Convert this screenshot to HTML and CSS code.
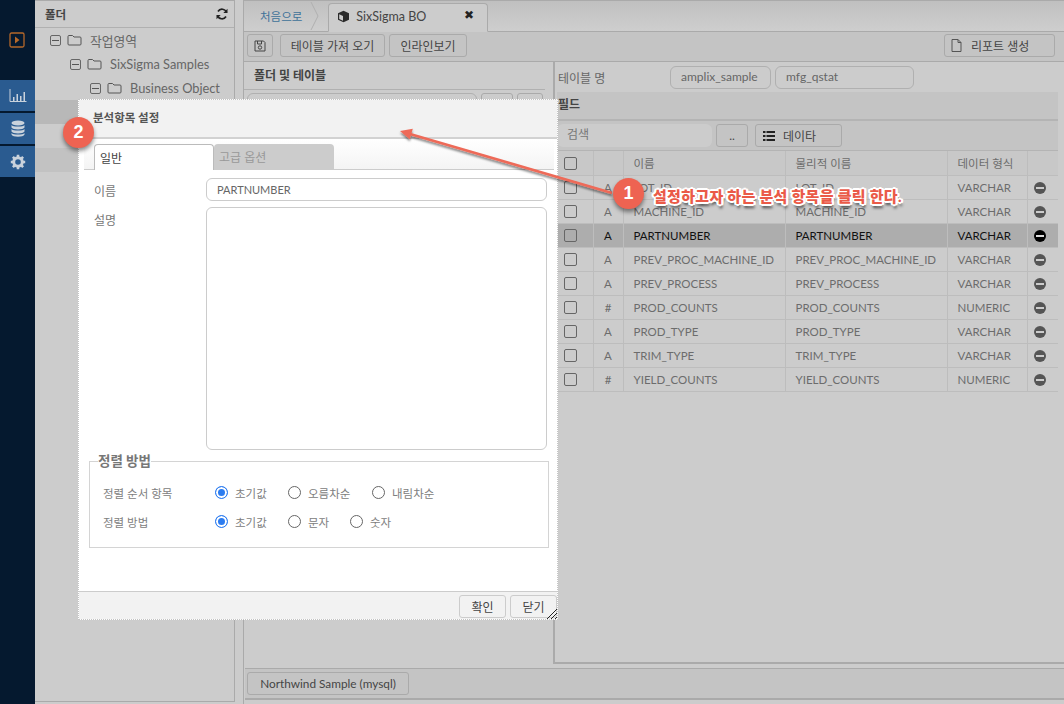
FILE: index.html
```html
<!DOCTYPE html>
<html lang="ko">

<head>
  <meta charset="UTF-8" />
  <meta name="viewport" content="width=device-width,initial-scale=1.0" />
  <title>SixSigma BO</title>
  <link rel="stylesheet" href="styles.css">
</head>

<body>
  <div class="app">
    <nav class="sidebar">
      <div class="side-toggle">
        <svg width="16" height="16" viewBox="0 0 16 16"><rect x="1" y="1" width="14" height="14" rx="1.5" fill="none" stroke="#b5682a" stroke-width="1.3"/><path d="M6 4.5 L10.5 8 L6 11.5 Z" fill="#b5682a"/></svg>
      </div>
      <div class="side-btn">
        <svg width="18" height="14" viewBox="0 0 18 14"><path d="M1 0 V12.5 H17.5" fill="none" stroke="#c9d2dc" stroke-width="1"/><path d="M4 8h1.500v4H4zM7.500 5H9v7H7.500zM11 7h1.500v5H11zM14.500 3H16v9h-1.500z" fill="#c9d2dc"/></svg>
      </div>
      <div class="side-btn">
        <svg width="14" height="17" viewBox="0 0 14 17" fill="#c9d2dc"><ellipse cx="7" cy="3" rx="6.500" ry="2.500"/><path d="M.5 5c1 2 12 2 13 0v2.500c-1 2.500-12 2.500-13 0zM.5 9c1 2 12 2 13 0v2.500c-1 2.500-12 2.500-13 0zM.5 13c1 2 12 2 13 0v1.500c-1 3-12 3-13 0z"/></svg>
      </div>
      <div class="side-btn">
        <svg width="16" height="16" viewBox="0 0 16 16"><circle cx="8" cy="8" r="4.300" fill="none" stroke="#c9d2dc" stroke-width="3"/><path d="M8 .8V4M8 12v3.200M.8 8H4M12 8h3.200M2.900 2.900l2.200 2.200M10.900 10.900l2.200 2.200M13.100 2.900l-2.200 2.200M5.100 10.900l-2.200 2.200" stroke="#c9d2dc" stroke-width="2.600"/></svg>
      </div>
    </nav>

    <aside class="folders">
      <div class="folders-head">
        <span>폴더</span>
        <svg width="12" height="12" viewBox="0 0 12 12"><path d="M10.500 4.500A4.700 4.700 0 0 0 2 3.500M1.500 7.500A4.700 4.700 0 0 0 10 8.500" fill="none" stroke="#222" stroke-width="1.700"/><path d="M11.500 .8V5H7.300zM.5 11.200V7h4.200z" fill="#222"/></svg>
      </div>
      <div class="tree-row lvl0">
        <span class="expander"></span>
        <svg class="folder" width="15" height="12" viewBox="0 0 15 12"><path d="M1 2.500a1 1 0 0 1 1-1h3.500l1.500 1.500h6a1 1 0 0 1 1 1v6a1 1 0 0 1-1 1H2a1 1 0 0 1-1-1z" fill="none" stroke="#555" stroke-width="1"/></svg>
        작업영역
      </div>
      <div class="tree-row lvl1">
        <span class="expander"></span>
        <svg class="folder" width="15" height="12" viewBox="0 0 15 12"><path d="M1 2.500a1 1 0 0 1 1-1h3.500l1.500 1.500h6a1 1 0 0 1 1 1v6a1 1 0 0 1-1 1H2a1 1 0 0 1-1-1z" fill="none" stroke="#555" stroke-width="1"/></svg>
        SixSigma Samples
      </div>
      <div class="tree-row lvl2">
        <span class="expander"></span>
        <svg class="folder" width="15" height="12" viewBox="0 0 15 12"><path d="M1 2.500a1 1 0 0 1 1-1h3.500l1.500 1.500h6a1 1 0 0 1 1 1v6a1 1 0 0 1-1 1H2a1 1 0 0 1-1-1z" fill="none" stroke="#555" stroke-width="1"/></svg>
        Business Object
      </div>
      <div class="tree-row selected"></div>
      <div class="tree-row"></div>
      <div class="tree-row alt"></div>
    </aside>

    <main class="main">
      <div class="tabstrip">
        <a class="home-link">처음으로</a>
        <svg class="crumb" width="10" height="30" viewBox="0 0 10 30"><path d="M1 1 L8 15 L1 29" fill="none" stroke="#b0b0b0"/></svg>
        <div class="doc-tab">
          <svg width="13" height="13" viewBox="0 0 13 13"><path d="M6.500 .8 L12 3.300 V9.700 L6.500 12.300 L1 9.700 V3.300 Z" fill="#2a2a2a"/><path d="M2.200 4.300 L6 6.100 V10.800 L2.200 9 Z" fill="#ccc"/></svg>
          <span class="doc-title">SixSigma BO</span>
          <span class="doc-close">✖</span>
        </div>
      </div>

      <div class="toolbar">
        <button class="btn icon-btn">
          <svg width="12" height="12" viewBox="0 0 12 12"><path d="M1 1h8.500L11 2.500V11H1z M3.500 1v3h4V1" fill="none" stroke="#444"/><circle cx="6" cy="7.500" r="1.700" fill="none" stroke="#444"/></svg>
        </button>
        <button class="btn wide-import">테이블 가져 오기</button>
        <button class="btn wide-inline">인라인보기</button>
        <button class="btn report-btn">
          <svg width="11" height="13" viewBox="0 0 11 13"><path d="M1 .5h6l3 3v9H1z M7 .5v3h3" fill="none" stroke="#555"/></svg>
          리포트 생성
        </button>
      </div>

      <div class="split">
        <section class="left-pane">
          <h4 class="pane-title">폴더 및 테이블</h4>
          <div class="left-search">
            <span class="input grow"></span>
            <button class="btn small-a"></button>
            <button class="btn small-b"></button>
          </div>
        </section>

        <section class="right-pane">
          <div class="table-name">
            <label>테이블 명</label>
            <span class="input schema">amplix_sample</span>
            <span class="input tname">mfg_qstat</span>
          </div>
          <h4 class="field-title">필드</h4>
          <div class="field-tools">
            <span class="input field-search">검색</span>
            <button class="btn dots">..</button>
            <button class="btn data-btn">
              <svg width="12" height="10" viewBox="0 0 12 10" fill="#222"><path d="M0 0h2.500v2H0zM3.500 0H12v2H3.500zM0 4h2.500v2H0zM3.500 4H12v2H3.500zM0 8h2.500v2H0zM3.500 8H12v2H3.500z"/></svg>
              데이타
            </button>
          </div>
          <table class="fields">
            <thead>
              <tr><th class="c-check"><span class="check"></span></th><th class="c-type"></th><th class="c-name">이름</th><th class="c-phys">물리적 이름</th><th class="c-data">데이터 형식</th><th class="c-del"></th></tr>
            </thead>
            <tbody>
              <tr><td><span class="check"></span></td><td class="mid">A</td><td>LOT_ID</td><td>LOT_ID</td><td>VARCHAR</td><td class="del"><span class="minus"></span></td></tr>
              <tr><td><span class="check"></span></td><td class="mid">A</td><td>MACHINE_ID</td><td>MACHINE_ID</td><td>VARCHAR</td><td class="del"><span class="minus"></span></td></tr>
              <tr class="picked"><td><span class="check"></span></td><td class="mid">A</td><td>PARTNUMBER</td><td>PARTNUMBER</td><td>VARCHAR</td><td class="del"><span class="minus"></span></td></tr>
              <tr><td><span class="check"></span></td><td class="mid">A</td><td>PREV_PROC_MACHINE_ID</td><td>PREV_PROC_MACHINE_ID</td><td>VARCHAR</td><td class="del"><span class="minus"></span></td></tr>
              <tr><td><span class="check"></span></td><td class="mid">A</td><td>PREV_PROCESS</td><td>PREV_PROCESS</td><td>VARCHAR</td><td class="del"><span class="minus"></span></td></tr>
              <tr><td><span class="check"></span></td><td class="mid">#</td><td>PROD_COUNTS</td><td>PROD_COUNTS</td><td>NUMERIC</td><td class="del"><span class="minus"></span></td></tr>
              <tr><td><span class="check"></span></td><td class="mid">A</td><td>PROD_TYPE</td><td>PROD_TYPE</td><td>VARCHAR</td><td class="del"><span class="minus"></span></td></tr>
              <tr><td><span class="check"></span></td><td class="mid">A</td><td>TRIM_TYPE</td><td>TRIM_TYPE</td><td>VARCHAR</td><td class="del"><span class="minus"></span></td></tr>
              <tr><td><span class="check"></span></td><td class="mid">#</td><td>YIELD_COUNTS</td><td>YIELD_COUNTS</td><td>NUMERIC</td><td class="del"><span class="minus"></span></td></tr>
            </tbody>
          </table>
        </section>
      </div>

      <div class="bottom-bar">
        <button class="btn sample-btn">Northwind Sample (mysql)</button>
      </div>
    </main>
  </div>

  <!-- 분석항목 설정 dialog -->
  <div class="dialog">
    <div class="dialog-head">분석항목 설정</div>
    <div class="dialog-tabs">
      <span class="dtab on">일반</span>
      <span class="dtab">고급 옵션</span>
    </div>
    <div class="dialog-body">
      <div class="form-row">
        <label>이름</label>
        <span class="text-input">PARTNUMBER</span>
      </div>
      <div class="form-row">
        <label>설명</label>
        <span class="text-area"></span>
      </div>
      <fieldset class="sort-box">
        <legend>정렬 방법</legend>
        <div class="sort-row">
          <label>정렬 순서 항목</label>
          <span class="radio on"></span><span class="r-text first">초기값</span>
          <span class="radio"></span><span class="r-text asc">오름차순</span>
          <span class="radio"></span><span class="r-text">내림차순</span>
        </div>
        <div class="sort-row">
          <label>정렬 방법</label>
          <span class="radio on"></span><span class="r-text first">초기값</span>
          <span class="radio"></span><span class="r-text str">문자</span>
          <span class="radio"></span><span class="r-text">숫자</span>
        </div>
      </fieldset>
    </div>
    <div class="dialog-foot">
      <button class="btn foot-btn">확인</button>
      <button class="btn foot-btn">닫기</button>
      <svg class="grip" width="10" height="10" viewBox="0 0 10 10"><path d="M0 10 L10 0 M4 10 L10 4 M8 10 L10 8" stroke="#222" stroke-width="1"/></svg>
    </div>
  </div>

  <!-- annotation over the screenshot -->
  <svg class="arrow" width="1064" height="704" viewBox="0 0 1064 704">
    <defs>
      <filter id="drop" x="-10%" y="-30%" width="120%" height="170%"><feDropShadow dx="0" dy="2" stdDeviation="1.200" flood-color="#000" flood-opacity=".5"/></filter>
    </defs>
    <g filter="url(#drop)">
      <path d="M612 193 L410 134" stroke="#ee6a58" stroke-width="2.600" fill="none"/>
      <path d="M400 131 L412.800 128.700 L409.700 139.300 Z" fill="#ee6a58"/>
    </g>
  </svg>
  <span class="step step-one">1</span>
  <span class="step step-two">2</span>
  <span class="note">설정하고자 하는 분석 항목을 클릭 한다.</span>
</body>

</html>
```

FILE: styles.css
```css
* {
  box-sizing: border-box;
}

html,
body {
  margin: 0;
  height: 704px;
  overflow: hidden;
}

body {
  position: relative;
  font-family: "Lato", "Noto Sans CJK KR", sans-serif;
  font-size: 12px;
  color: #666;
  background: #ccc;
}

button {
  font: inherit;
}

.app {
  display: flex;
  height: 704px;
}

/* sidebar */
.sidebar {
  width: 35px;
  flex: none;
  background: #05192f;
  padding-top: 32px;
}

.side-toggle {
  height: 48px;
  padding-left: 9px;
}

.side-btn {
  height: 31px;
  margin-bottom: 2px;
  background: #2a5b90;
  display: flex;
  align-items: center;
  justify-content: center;
}

/* folder tree */
.folders {
  width: 200px;
  height: 702px;
  flex: none;
  background: #ccc;
  border-right: 1px solid #aaa;
  border-bottom: 1px solid #aaa;
}

.folders-head {
  height: 28px;
  border-top: 1px solid #aaa;
  border-bottom: 1px solid #b0b0b0;
  padding: 0 6px 0 10px;
  display: flex;
  align-items: center;
  justify-content: space-between;
  font-weight: 700;
  color: #444;
  font-size: 11.500px;
}

.tree-row {
  height: 24px;
  display: flex;
  align-items: center;
  font-size: 12.800px;
  color: #666;
}

.tree-row.selected {
  background: #b8b8b8;
}

.tree-row.alt {
  background: #c2c2c2;
}

.lvl0 {
  padding-left: 15px;
}

.lvl1 {
  padding-left: 35px;
}

.lvl2 {
  padding-left: 55px;
}

.expander {
  position: relative;
  width: 11px;
  height: 11px;
  border: 1px solid #666;
  border-radius: 2px;
  margin-right: 6px;
}

.expander::after {
  content: "";
  position: absolute;
  left: 1px;
  right: 1px;
  top: 4px;
  height: 1px;
  background: #555;
}

.folder {
  margin-right: 8px;
}

/* main area */
.main {
  flex: 1;
  min-width: 0;
  margin-left: 8px;
  display: flex;
  flex-direction: column;
  border-left: 1px solid #aaa;
}

.tabstrip {
  height: 32px;
  flex: none;
  display: flex;
  align-items: flex-end;
  padding-left: 16px;
  border-top: 1px solid #aaa;
  border-bottom: 1px solid #aaa;
  background: linear-gradient(#c0c0c0, #cecece);
}

.home-link {
  color: #3f7299;
  align-self: center;
  font-size: 11.500px;
}

.crumb {
  margin: 0 8px 0 8px;
  align-self: center;
}

.doc-tab {
  width: 160px;
  height: 29px;
  margin-bottom: -1px;
  border: 1px solid #aaa;
  border-bottom: 1px solid #ccc;
  border-radius: 4px 4px 0 0;
  background: #ccc;
  display: flex;
  align-items: center;
  padding: 0 0 3px 8px;
  color: #444;
  font-size: 12.500px;
}

.doc-title {
  margin-left: 6px;
}

.doc-close {
  margin-left: 38px;
  color: #222;
  font-size: 12px;
  margin-top: -4px;
}

.toolbar {
  height: 30px;
  flex: none;
  display: flex;
  align-items: center;
  padding: 0 0 2px 3px;
  background: #c4c4c4;
  border-bottom: 1px solid #aaa;
}

.btn {
  height: 23px;
  padding: 0;
  border: 1px solid #aaa;
  border-radius: 3px;
  background: transparent;
  color: #444;
  font-size: 12px;
}

.icon-btn {
  width: 26px;
  display: flex;
  align-items: center;
  justify-content: center;
}

.wide-import {
  width: 105px;
  margin-left: 7px;
}

.wide-inline {
  width: 78px;
  margin-left: 4px;
}

.report-btn {
  width: 111px;
  margin-left: auto;
  margin-right: 9px;
  display: flex;
  align-items: center;
  padding-left: 6px;
  gap: 9px;
}

.split {
  flex: 1;
  min-height: 0;
  display: flex;
}

.left-pane {
  width: 309px;
  flex: none;
  padding-right: 8px;
}

.pane-title {
  margin: 0;
  height: 28px;
  line-height: 27px;
  padding-left: 10px;
  font-size: 12px;
  color: #444;
  border-bottom: 1px solid #b0b0b0;
}

.left-search {
  display: flex;
  gap: 4px;
  padding: 3px 2px 0 3px;
}

.input {
  height: 23px;
  line-height: 20px;
  border: 1px solid #b0b0b0;
  border-radius: 6px;
  padding-left: 10px;
  display: inline-block;
}

.grow {
  flex: 1;
}

.small-a {
  width: 32px;
}

.small-b {
  width: 26px;
}

.right-pane {
  flex: 1;
  min-width: 0;
  height: 602px;
  border-left: 2px solid #aaa;
  border-bottom: 2px solid #aaa;
  display: flex;
  flex-direction: column;
  padding-right: 6px;
}

.table-name {
  height: 30px;
  display: flex;
  align-items: center;
  padding-left: 3px;
  flex: none;
}

.table-name label {
  width: 112px;
}

.schema {
  width: 101px;
  margin-right: 4px;
}

.tname {
  width: 139px;
}

.field-title {
  margin: 0 0 0 2px;
  height: 29px;
  flex: none;
  line-height: 26px;
  padding-left: 1px;
  font-size: 12px;
  color: #444;
  background: #c4c4c4;
  border-bottom: 2px solid #b4b4b4;
}

.field-tools {
  height: 30px;
  flex: none;
  margin-left: 2px;
  background: #c4c4c4;
  display: flex;
  align-items: center;
  border-bottom: 1px solid #b4b4b4;
}

.field-search {
  width: 155px;
  border: 0;
  background: #ccc;
  color: #777;
  line-height: 22px;
  margin-right: 4px;
  padding-left: 10px;
}

.dots {
  width: 32px;
  margin-right: 7px;
}

.data-btn {
  width: 87px;
  display: flex;
  align-items: center;
  padding-left: 7px;
  gap: 8px;
}

.fields {
  width: 500px;
  margin-left: 3px;
  border-collapse: collapse;
  table-layout: fixed;
  flex: none;
  font-size: 11.500px;
}

.fields th,
.fields td {
  height: 24px;
  padding: 0 0 0 10px;
  text-align: left;
  font-weight: 400;
  border-right: 1px solid #bdbdbd;
  border-bottom: 1px solid #bdbdbd;
  color: #6c6c6c;
  white-space: nowrap;
}

.fields th {
  background: #c8c8c8;
}

.fields th:last-child,
.fields td:last-child {
  border-right: 0;
}

.fields .mid {
  padding: 0;
  text-align: center;
}

.fields td:first-child,
.fields th:first-child,
.fields .del {
  padding: 0 0 0 6px;
}

.c-check {
  width: 35px;
}

.c-type {
  width: 30px;
}

.c-name,
.c-phys {
  width: 162px;
}

.c-data {
  width: 80px;
}

.fields .picked td {
  background: #adadad;
  color: #111;
}

.check {
  display: inline-block;
  width: 13px;
  height: 13px;
  border: 1px solid #666;
  border-radius: 2px;
  vertical-align: middle;
}

.minus {
  position: relative;
  display: inline-block;
  width: 12px;
  height: 12px;
  border-radius: 50%;
  background: #555;
  vertical-align: middle;
}

.minus::after {
  content: "";
  position: absolute;
  left: 2px;
  right: 2px;
  top: 5px;
  height: 2px;
  background: #ccc;
}

.picked .minus {
  background: #000;
}

.picked .minus::after {
  background: #ddd;
}

.bottom-bar {
  height: 32px;
  flex: none;
  margin: 2px 0 4px 1px;
  padding: 3px 0 0 2px;
  background: #c4c4c4;
  border-top: 1px solid #aaa;
  border-bottom: 2px solid #aaa;
}

.sample-btn {
  width: 162px;
  font-size: 11.800px;
}

/* dialog */
.dialog {
  position: absolute;
  left: 78px;
  top: 99px;
  width: 480px;
  height: 521px;
  background: #fff;
  border: 1px dotted #c4c4c4;
  display: flex;
  flex-direction: column;
}

.dialog-head {
  height: 39px;
  flex: none;
  background: #f2f2f2;
  border-bottom: 2px solid #d2d2d2;
  padding: 0 0 4px 14px;
  display: flex;
  align-items: center;
  font-weight: 700;
  font-size: 11.500px;
  color: #555;
}

.dialog-tabs {
  height: 31px;
  flex: none;
  margin: 0 3px 0 5px;
  padding: 5px 0 0 10px;
  display: flex;
  background: linear-gradient(#fff, #f4f4f4);
  border-bottom: 1px solid #ccc;
}

.dtab {
  width: 120px;
  height: 26px;
  border-radius: 4px 4px 0 0;
  background: #ccc;
  color: #999;
  padding: 4px 0 0 5px;
}

.dtab.on {
  width: 120px;
  background: #fff;
  color: #444;
  border: 1px solid #bbb;
  border-bottom: 0;
}

.dialog-body {
  flex: 1;
  min-height: 0;
  padding: 8px 10px 0 10px;
}

.form-row {
  display: flex;
  margin-bottom: 6px;
}

.form-row label {
  width: 117px;
  flex: none;
  padding: 4px 0 0 5px;
  color: #777;
}

.text-input {
  width: 341px;
  height: 23px;
  line-height: 21px;
  border: 1px solid #ccc;
  border-radius: 6px;
  padding-left: 10px;
  color: #666;
  font-size: 11px;
}

.text-area {
  width: 341px;
  height: 243px;
  border: 1px solid #ccc;
  border-radius: 6px;
}

.sort-box {
  width: 460px;
  height: 96px;
  margin: -4px 0 0 0;
  padding: 8px 0 0 13px;
  border: 1px solid #d4d4d4;
  min-width: 0;
}

.sort-box legend {
  margin-left: -5px;
  padding: 0;
  font-size: 13.500px;
  font-weight: 700;
  color: #777;
  line-height: 18px;
}

.sort-row {
  display: flex;
  align-items: center;
  height: 29px;
  color: #808080;
  font-size: 11.500px;
}

.sort-row label {
  width: 112px;
  flex: none;
}

.radio {
  width: 13px;
  height: 13px;
  flex: none;
  border: 1px solid #666;
  border-radius: 50%;
}

.radio.on {
  border-color: #2c7cf0;
  background: #2c7cf0;
  box-shadow: inset 0 0 0 2px #fff;
}

.r-text {
  margin: 0 20px 0 7px;
  white-space: nowrap;
}

.r-text.first {
  width: 33px;
}

.r-text.asc {
  width: 44px;
}

.r-text.str {
  width: 22px;
}

.dialog-foot {
  position: relative;
  height: 28px;
  flex: none;
  background: #f2f2f2;
  border-top: 1px solid #ccc;
  display: flex;
  justify-content: flex-end;
  align-items: center;
  gap: 4px;
}

.foot-btn {
  width: 47px;
  height: 23px;
  border-color: #ccc;
  margin-top: 1px;
  color: #444;
}

.grip {
  position: absolute;
  right: 0;
  bottom: 0;
}

/* annotation */
.arrow {
  position: absolute;
  left: 0;
  top: 0;
  pointer-events: none;
}

.step {
  position: absolute;
  width: 31px;
  height: 31px;
  line-height: 30px;
  border-radius: 50%;
  background: #ee6352;
  color: #fff;
  text-align: center;
  font-family: "Liberation Sans", sans-serif;
  font-size: 18px;
  font-weight: 700;
  box-shadow: 0 3px 4px rgba(0, 0, 0, .45);
}

.step-one {
  left: 613px;
  top: 178px;
}

.step-two {
  left: 63px;
  top: 117px;
}

.note {
  position: absolute;
  left: 653px;
  top: 185px;
  font-size: 15px;
  letter-spacing: .3px;
  font-weight: 900;
  color: #ea5a48;
  white-space: nowrap;
  text-shadow: -2px 0 0 #fff, 2px 0 0 #fff, 0 -2px 0 #fff, 0 2px 0 #fff, -1px -1px 0 #fff, 1px 1px 0 #fff, -1px 1px 0 #fff, 1px -1px 0 #fff, -2px -1px 0 #fff, 2px 1px 0 #fff, -2px 1px 0 #fff, 2px -1px 0 #fff, 1px 4px 3px rgba(0, 0, 0, .7);
}
```
